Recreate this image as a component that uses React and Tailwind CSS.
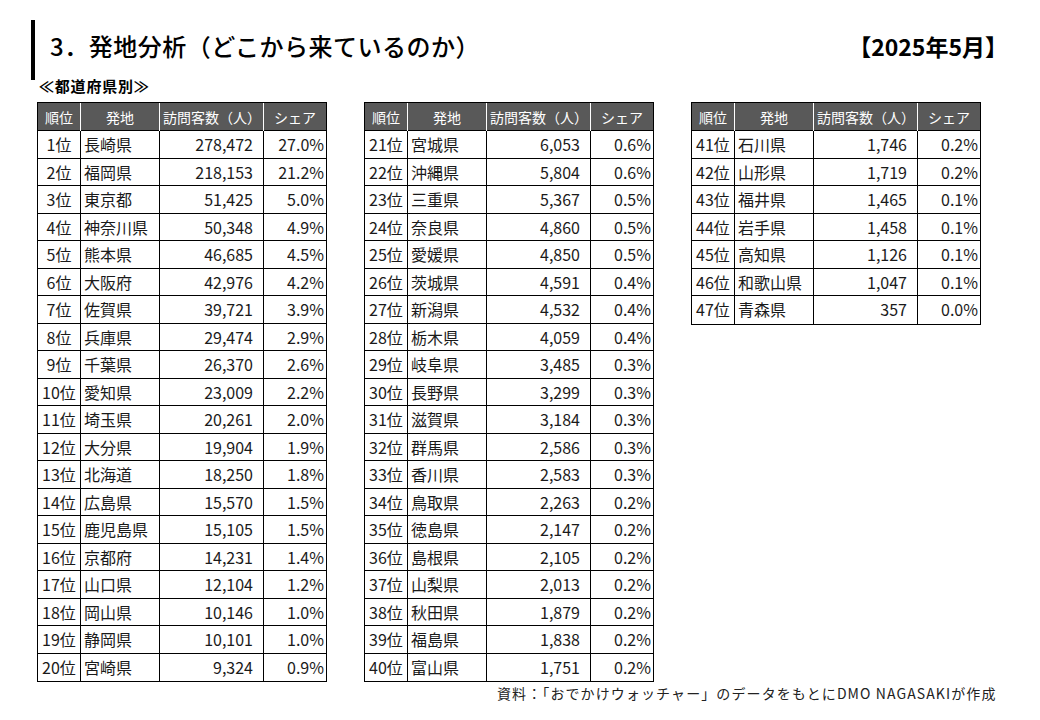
const t1 = [
  ["1位", "長崎県", "278,472", "27.0%"],
  ["2位", "福岡県", "218,153", "21.2%"],
  ["3位", "東京都", "51,425", "5.0%"],
  ["4位", "神奈川県", "50,348", "4.9%"],
  ["5位", "熊本県", "46,685", "4.5%"],
  ["6位", "大阪府", "42,976", "4.2%"],
  ["7位", "佐賀県", "39,721", "3.9%"],
  ["8位", "兵庫県", "29,474", "2.9%"],
  ["9位", "千葉県", "26,370", "2.6%"],
  ["10位", "愛知県", "23,009", "2.2%"],
  ["11位", "埼玉県", "20,261", "2.0%"],
  ["12位", "大分県", "19,904", "1.9%"],
  ["13位", "北海道", "18,250", "1.8%"],
  ["14位", "広島県", "15,570", "1.5%"],
  ["15位", "鹿児島県", "15,105", "1.5%"],
  ["16位", "京都府", "14,231", "1.4%"],
  ["17位", "山口県", "12,104", "1.2%"],
  ["18位", "岡山県", "10,146", "1.0%"],
  ["19位", "静岡県", "10,101", "1.0%"],
  ["20位", "宮崎県", "9,324", "0.9%"],
];

const t2 = [
  ["21位", "宮城県", "6,053", "0.6%"],
  ["22位", "沖縄県", "5,804", "0.6%"],
  ["23位", "三重県", "5,367", "0.5%"],
  ["24位", "奈良県", "4,860", "0.5%"],
  ["25位", "愛媛県", "4,850", "0.5%"],
  ["26位", "茨城県", "4,591", "0.4%"],
  ["27位", "新潟県", "4,532", "0.4%"],
  ["28位", "栃木県", "4,059", "0.4%"],
  ["29位", "岐阜県", "3,485", "0.3%"],
  ["30位", "長野県", "3,299", "0.3%"],
  ["31位", "滋賀県", "3,184", "0.3%"],
  ["32位", "群馬県", "2,586", "0.3%"],
  ["33位", "香川県", "2,583", "0.3%"],
  ["34位", "鳥取県", "2,263", "0.2%"],
  ["35位", "徳島県", "2,147", "0.2%"],
  ["36位", "島根県", "2,105", "0.2%"],
  ["37位", "山梨県", "2,013", "0.2%"],
  ["38位", "秋田県", "1,879", "0.2%"],
  ["39位", "福島県", "1,838", "0.2%"],
  ["40位", "富山県", "1,751", "0.2%"],
];

const t3 = [
  ["41位", "石川県", "1,746", "0.2%"],
  ["42位", "山形県", "1,719", "0.2%"],
  ["43位", "福井県", "1,465", "0.1%"],
  ["44位", "岩手県", "1,458", "0.1%"],
  ["45位", "高知県", "1,126", "0.1%"],
  ["46位", "和歌山県", "1,047", "0.1%"],
  ["47位", "青森県", "357", "0.0%"],
];

const RankTable = ({ rows }) => (
  <div className="w-[290px] border border-black self-start">
    <div className="grid grid-cols-[42px_79px_104px_63px] h-[28px] bg-[#595959] text-white text-[14px] leading-[28px] border-b border-black">
      <div className="text-center">順位</div>
      <div className="text-center border-l border-white">発地</div>
      <div className="pl-[3px] whitespace-nowrap border-l border-white">訪問客数（人）</div>
      <div className="text-center border-l border-white">シェア</div>
    </div>
    {rows.map((r, i) => (
      <div
        key={r[0]}
        className={
          "grid grid-cols-[42px_79px_104px_63px] h-[27.5px] text-[16px] leading-[26px] text-[#1a1a1a]" +
          (i < rows.length - 1 ? " border-b border-black" : "")
        }
      >
        <div className="text-center whitespace-nowrap">{r[0]}</div>
        <div className="pl-[3px] whitespace-nowrap border-l border-black">{r[1]}</div>
        <div className="text-right pr-[10px] border-l border-black">{r[2]}</div>
        <div className="text-right pr-[2px] border-l border-black">{r[3]}</div>
      </div>
    ))}
  </div>
);

export default function App() {
  return (
    <div className="w-[1040px] h-[720px] bg-white relative overflow-hidden font-['Noto_Sans_CJK_JP','Noto_Sans',sans-serif] text-black">
      <div className="pt-[20px] pl-[31px] pr-[32px]">
        <div className="h-[60px] border-l-[4px] border-black flex items-start justify-between pt-[12px]">
          <div className="pl-[15px] text-[24px] leading-[28px] font-medium tracking-[0.5px]">
            3．発地分析（どこから来ているのか）
          </div>
          <div className="text-[23px] leading-[28px] font-bold">【2025年5月】</div>
        </div>
      </div>
      <div className="pl-[39px] -mt-[3px] text-[15px] leading-[18px] font-bold tracking-[0.8px]">≪都道府県別≫</div>
      <div className="flex gap-[37px] pl-[37px] mt-[7px]">
        <RankTable rows={t1} />
        <RankTable rows={t2} />
        <RankTable rows={t3} />
      </div>
      <div className="absolute left-[497px] top-[684px] text-[14px] leading-[18px] text-[#222] whitespace-nowrap tracking-[1.1px]">
        資料：「おでかけウォッチャー」のデータをもとにDMO NAGASAKIが作成
      </div>
    </div>
  );
}
